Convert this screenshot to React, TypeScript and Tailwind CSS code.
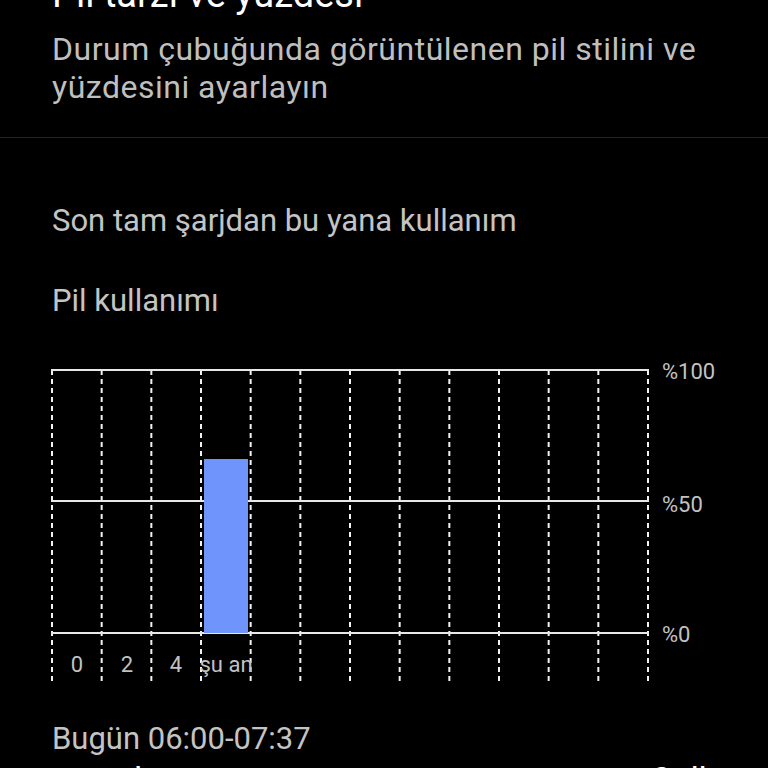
const GRID_X = Array.from({ length: 13 }, (_, i) => 52 + (596 / 12) * i);

const X_LABELS = [
  { x: 77, text: "0" },
  { x: 127, text: "2" },
  { x: 176, text: "4" },
  { x: 226, text: "şu an" },
];

function UsageChart() {
  return (
    <svg width={768} height={340} className="block" style={{ fontFamily: "Roboto, 'Noto Sans', sans-serif" }}>
      {GRID_X.map((x) => (
        <line key={x} x1={x} y1={20} x2={x} y2={333} stroke="#f2f2f2" strokeWidth={2} strokeDasharray="5 4" />
      ))}
      {[20, 151, 283].map((y) => (
        <line key={y} x1={51} y1={y} x2={649} y2={y} stroke="#e8e8e8" strokeWidth={2} />
      ))}
      <rect x={204} y={109} width={44} height={174} fill="#6f95fc" />
      <text x={662} y={29} fill="#c2c2c2" fontSize={22}>%100</text>
      <text x={662} y={162} fill="#c2c2c2" fontSize={22}>%50</text>
      <text x={662} y={292} fill="#c2c2c2" fontSize={22}>%0</text>
      {X_LABELS.map((l) => (
        <text key={l.text} x={l.x} y={322} fill="#c2c2c2" fontSize={22} textAnchor="middle">
          {l.text}
        </text>
      ))}
    </svg>
  );
}

export default function App() {
  return (
    <div className="h-[768px] w-[768px] overflow-hidden bg-black font-['Roboto','Noto_Sans',sans-serif]">
      <div className="px-[52px]">
        <h1 className="mt-[-28px] text-[38px] leading-[44px] text-white">Pil tarzı ve yüzdesi</h1>
        <p className="mt-[14px] text-[32px] leading-[38px] tracking-[0.5px] text-[#bfbfbf]">
          Durum çubuğunda görüntülenen pil stilini ve yüzdesini ayarlayın
        </p>
      </div>
      <div className="mt-[31px] h-px bg-[#232323]" />

      <div className="px-[52px]">
        <h2 className="mt-[64px] text-[31px] leading-[38px] text-[#c4c4c4]">Son tam şarjdan bu yana kullanım</h2>
        <h3 className="mt-[42px] text-[31px] leading-[38px] text-[#c4c4c4]">Pil kullanımı</h3>
      </div>

      <div className="mt-[30px]">
        <UsageChart />
      </div>

      <div className="px-[52px]">
        <p className="mt-[32px] text-[31px] leading-[34px] text-[#c4c4c4]">Bugün 06:00-07:37</p>
        <div className="mt-[8px] flex items-start justify-between text-[34px] leading-[30px] text-white">
          <span>ana ekran</span>
          <span>0 dk</span>
        </div>
      </div>
    </div>
  );
}
